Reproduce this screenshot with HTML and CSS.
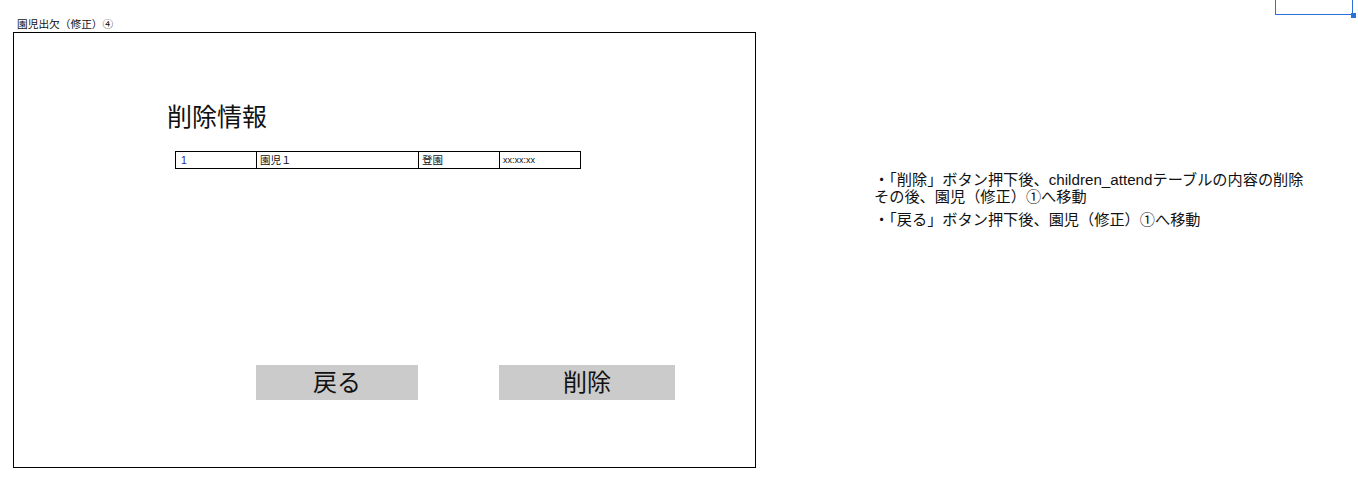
FILE: index.html
```html
<!DOCTYPE html>
<html lang="ja">
<head>
<meta charset="utf-8">
<title>園児出欠（修正）④</title>
<link rel="stylesheet" href="styles.css">
</head>
<body>
<div class="page">
  <div class="left">
    <div class="screen-title">園児出欠（修正）④</div>
    <div class="frame">
      <h1 class="heading">削除情報</h1>
      <table class="info">
        <tr>
          <td class="c1 num">1</td>
          <td class="c2">園児１</td>
          <td class="c3">登園</td>
          <td class="c4 time">xx:xx:xx</td>
        </tr>
      </table>
      <div class="buttons">
        <div class="btn back">戻る</div>
        <div class="btn del">削除</div>
      </div>
    </div>
  </div>
  <div class="notes">
    <p class="note">・「削除」ボタン押下後、children_attendテーブルの内容の削除<br>その後、園児（修正）①へ移動</p>
    <p class="note">・「戻る」ボタン押下後、園児（修正）①へ移動</p>
  </div>
</div>
<div class="selection"><span class="handle"></span></div>
</body>
</html>
```

FILE: styles.css
```css
html, body {
  margin: 0;
  padding: 0;
  background: #fff;
}
body {
  font-family: "Liberation Sans", "Noto Sans CJK JP", sans-serif;
  color: #111;
  width: 1358px;
  height: 490px;
  overflow: hidden;
  position: relative;
}
.page {
  display: flex;
  padding-left: 13px;
}
.left {
  width: 743px;
  flex: none;
  padding-top: 16px;
}
.screen-title {
  font-size: 10.7px;
  line-height: 16px;
  height: 16px;
  padding-left: 4px;
  white-space: nowrap;
}
.frame {
  box-sizing: border-box;
  height: 436px;
  border: 1px solid #000;
  padding-top: 69px;
  display: flex;
  flex-direction: column;
  align-items: flex-start;
}
.heading {
  margin: 0 0 0 153px;
  font-size: 25px;
  font-weight: normal;
  line-height: 30px;
  color: #111;
}
.info {
  margin: 19px 0 0 161px;
  border-collapse: collapse;
  table-layout: fixed;
  width: 406px;
}
.info td {
  box-sizing: border-box;
  border: 1px solid #000;
  height: 17px;
  padding: 0 0 0 3px;
  font-size: 10.5px;
  line-height: 15px;
  white-space: nowrap;
  overflow: hidden;
}
.info .c1 { width: 81px; padding-left: 5px; }
.info .c2 { width: 162px; }
.info .c3 { width: 81px; }
.info .c4 { width: 81px; }
.info .num { color: #1a2a9a; }
.info .time { font-size: 9px; }
.buttons {
  margin: 196px 0 0 242px;
  display: flex;
  gap: 81px;
}
.btn {
  height: 35px;
  background: #cbcbcb;
  font-size: 24px;
  line-height: 35px;
  text-align: center;
  color: #111;
}
.back { width: 162px; }
.del { width: 176px; }
.notes {
  margin-left: 118px;
  padding-top: 171px;
  font-size: 15.2px;
  color: #111;
}
.note {
  margin: 0 0 6px 0;
  line-height: 17px;
  white-space: nowrap;
}
.selection {
  position: absolute;
  top: -4px;
  left: 1275px;
  width: 78px;
  height: 19px;
  box-sizing: border-box;
  border: 1px solid #2a72d8;
}
.handle {
  position: absolute;
  right: -4px;
  bottom: -4px;
  width: 5px;
  height: 5px;
  background: #2a72d8;
}
```
